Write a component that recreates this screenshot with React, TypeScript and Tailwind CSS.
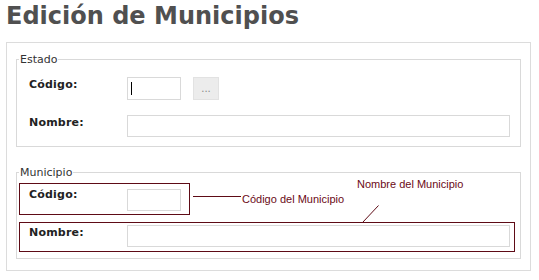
import React from "react";

const labelCls = "w-[98px] shrink-0 text-[11px] leading-[13px] font-bold tracking-[0.2px] text-[#222]";
const inputCls = "h-[22px] shrink-0 border border-[#d9d9d9] bg-white";

export default function App() {
  return (
    <div className="w-[539px] h-[280px] overflow-hidden bg-white font-['DejaVu_Sans',sans-serif]">
      <h1 className="ml-[6px] mt-[2px] text-[24px] leading-[28px] font-bold text-[#505050]">
        Edición de Municipios
      </h1>

      <div className="ml-[6px] mt-[12px] h-[229px] w-[525px] border border-[#dcdcdc] pl-[9px] pt-[10px]">
        {/* Estado */}
        <fieldset className="w-[505px] border border-[#d9d9d9]">
          <legend className="ml-[2px] px-px text-[11px] leading-[13px] text-[#333]">Estado</legend>
          <div className="pb-[9px] pl-[12px] pt-[11px]">
            <div className="flex items-start">
              <div className={`${labelCls} pt-[1px]`}>Código:</div>
              <div className={`${inputCls} flex h-[23px] w-[54px] items-center`}>
                <span className="ml-[3px] h-[13px] w-px bg-black" />
              </div>
              <button className="ml-[12px] flex h-[23px] w-[26px] items-center justify-center border border-[#e2e2e2] bg-[#ececec] pt-px text-[10px] leading-none text-[#888]">
                ...
              </button>
            </div>
            <div className="mt-[15px] flex items-start">
              <div className={`${labelCls} pt-[1px]`}>Nombre:</div>
              <div className={`${inputCls} w-[383px]`} />
            </div>
          </div>
        </fieldset>

        {/* Municipio */}
        <fieldset className="mt-[19px] w-[505px] border border-[#d9d9d9]">
          <legend className="ml-[2px] px-px text-[11px] leading-[13px] text-[#333]">Municipio</legend>
          <div className="relative pb-[6px] pl-[2px] pt-[4px]">
            <div className="flex items-start">
              <div className="flex h-[32px] w-[171px] items-start border border-[#5e0b16] pl-[9px] pt-[5px]">
                <div className={`${labelCls} -mt-px`}>Código:</div>
                <div className={`${inputCls} w-[54px]`} />
              </div>
              <span className="ml-[3px] mt-[13px] h-px w-[48px] bg-[#5e0b16]" />
              <span className="ml-px mt-[10px] font-['Liberation_Sans',Arial,sans-serif] text-[11px] leading-[13px] text-[#6b0a16]">
                Código del Municipio
              </span>
            </div>

            <div className="mt-[7px] flex h-[30px] w-[496px] items-start border border-[#5e0b16] pl-[9px] pt-[2px]">
              <div className={`${labelCls} pt-[1px]`}>Nombre:</div>
              <div className={`${inputCls} w-[383px]`} />
            </div>

            <span className="absolute left-[340px] top-[-1px] whitespace-nowrap font-['Liberation_Sans',Arial,sans-serif] text-[11px] leading-[13px] text-[#6b0a16]">
              Nombre del Municipio
            </span>
            <svg className="absolute left-[345px] top-[26px]" width="18" height="18" viewBox="0 0 18 18">
              <line x1="16.5" y1="0.5" x2="1" y2="17" stroke="#5e0b16" strokeWidth="1" />
            </svg>
          </div>
        </fieldset>
      </div>
    </div>
  );
}
